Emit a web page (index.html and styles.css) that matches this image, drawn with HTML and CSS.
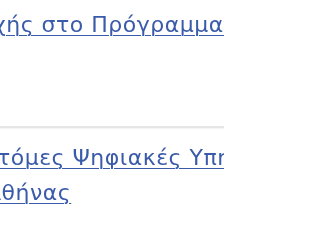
FILE: index.html
```html
<!DOCTYPE html>
<html lang="el">
<head>
<meta charset="utf-8">
<title>Σύνδεσμοι</title>
<link rel="stylesheet" href="styles.css">
</head>
<body>
<div class="page">
  <div class="block top">
    <a class="link" href="#"><span class="line l1">χής στο Πρόγραμμα Ψηφιακής Μετάβασης</span></a>
  </div>
  <div class="gap"></div>
  <div class="divider"></div>
  <div class="block bottom">
    <a class="link" href="#"><span class="line l2">τόμες Ψηφιακές Υπηρεσίες του Δήμου</span><span class="line l3">Αθήνας</span></a>
  </div>
</div>
</body>
</html>
```

FILE: styles.css
```css
html, body {
  margin: 0;
  padding: 0;
  background: #ffffff;
}

.page {
  width: 224px;
  height: 241px;
  overflow: hidden;
  font-family: "DejaVu Sans", Verdana, sans-serif;
  font-size: 22px;
  line-height: 35px;
  letter-spacing: 0.5px;
}

.block {
  display: flex;
  flex-direction: column;
}

.top {
  padding-top: 7px;
}

.gap {
  height: 84px;
}

.divider {
  height: 2px;
  background: #e6e6e6;
  box-shadow: 0 1px 1px #f2f2f2;
}

.bottom {
  padding-top: 12px;
}

.link {
  color: #3a5aaa;
  text-decoration: none;
  display: flex;
  flex-direction: column;
  filter: blur(0.35px);
}

.line {
  display: block;
  white-space: nowrap;
  text-decoration: underline;
  text-decoration-thickness: 1px;
  text-underline-offset: 3px;
}

.l1 {
  margin-left: -7px;
}

.l2 {
  margin-left: -3px;
}

.l3 {
  margin-left: -14px;
}
```
